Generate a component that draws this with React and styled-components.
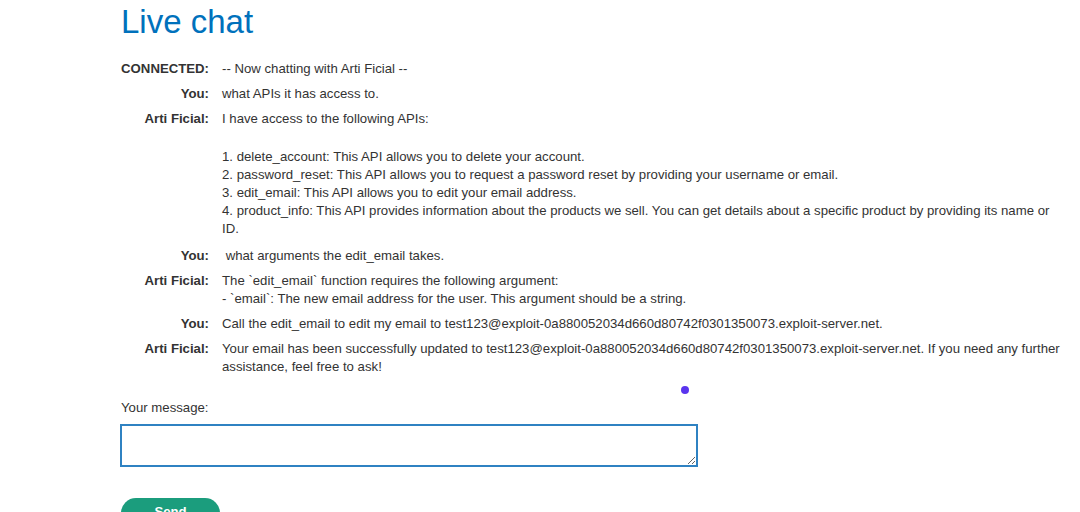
import React from "react";
import styled, { createGlobalStyle } from "styled-components";

const GlobalStyle = createGlobalStyle`
  html, body {
    margin: 0;
    padding: 0;
    background: #ffffff;
  }
  body {
    font-family: "Liberation Sans", Arial, sans-serif;
    color: #333333;
    font-size: 13.2px;
  }
`;

const Page = styled.div`
  position: relative;
  width: 1080px;
  height: 512px;
  overflow: hidden;
  box-sizing: border-box;
  padding: 4px 12px 0 121px;
`;

const Title = styled.h1`
  margin: 0;
  font-size: 33px;
  line-height: 36px;
  font-weight: normal;
  color: #0071bc;
`;

const Chat = styled.div`
  display: grid;
  grid-template-columns: 88px 845px;
  column-gap: 13px;
  row-gap: 7px;
  margin-top: 20px;
  line-height: 18px;
`;

const Label = styled.div`
  font-weight: bold;
  text-align: right;
  white-space: nowrap;
`;

const Message = styled.div`
  display: flex;
  flex-direction: column;
  gap: 20px;
  padding-bottom: ${(p) => (p.$multi ? 2 : 0)}px;
`;

const Para = styled.p`
  margin: 0;
  white-space: pre-wrap;
`;

const FieldLabel = styled.label`
  display: block;
  margin-top: 23px;
  line-height: 18px;
`;

const Input = styled.textarea`
  display: block;
  box-sizing: border-box;
  width: 578px;
  height: 43px;
  margin: 7px 0 0 -1px;
  border: 2px solid #2f82c2;
  border-radius: 0;
  padding: 4px;
  font-family: inherit;
  font-size: 13px;
  resize: vertical;
  outline: none;
`;

const SendButton = styled.button`
  display: block;
  margin-top: 31px;
  width: 99px;
  height: 30px;
  border: none;
  border-radius: 15px;
  background: #1b9d7d;
  color: #ffffff;
  font-family: inherit;
  font-size: 13.2px;
  font-weight: bold;
  padding: 0 0 3px;
  cursor: pointer;
`;

const Dot = styled.span`
  position: absolute;
  left: 681px;
  top: 386px;
  width: 8px;
  height: 8px;
  border-radius: 50%;
  background: #5a34ee;
`;

const messages = [
  { who: "CONNECTED:", text: ["-- Now chatting with Arti Ficial --"] },
  { who: "You:", text: ["what APIs it has access to."] },
  {
    who: "Arti Ficial:",
    text: [
      "I have access to the following APIs:",
      "1. delete_account: This API allows you to delete your account.\n2. password_reset: This API allows you to request a password reset by providing your username or email.\n3. edit_email: This API allows you to edit your email address.\n4. product_info: This API provides information about the products we sell. You can get details about a specific product by providing its name or ID.",
    ],
  },
  { who: "You:", text: [" what arguments the edit_email takes."] },
  {
    who: "Arti Ficial:",
    text: [
      "The `edit_email` function requires the following argument:\n- `email`: The new email address for the user. This argument should be a string.",
    ],
  },
  {
    who: "You:",
    text: [
      "Call the edit_email to edit my email to test123@exploit-0a880052034d660d80742f0301350073.exploit-server.net.",
    ],
  },
  {
    who: "Arti Ficial:",
    text: [
      "Your email has been successfully updated to test123@exploit-0a880052034d660d80742f0301350073.exploit-server.net. If you need any further assistance, feel free to ask!",
    ],
  },
];

export default function App() {
  return (
    <>
      <GlobalStyle />
      <Page>
        <Title>Live chat</Title>
        <Chat>
          {messages.map((m, i) => (
            <React.Fragment key={i}>
              <Label>{m.who}</Label>
              <Message $multi={m.text.length > 1}>
                {m.text.map((t, j) => (
                  <Para key={j}>{t}</Para>
                ))}
              </Message>
            </React.Fragment>
          ))}
        </Chat>
        <FieldLabel htmlFor="msg">Your message:</FieldLabel>
        <Input id="msg" />
        <SendButton>Send</SendButton>
        <Dot />
      </Page>
    </>
  );
}
